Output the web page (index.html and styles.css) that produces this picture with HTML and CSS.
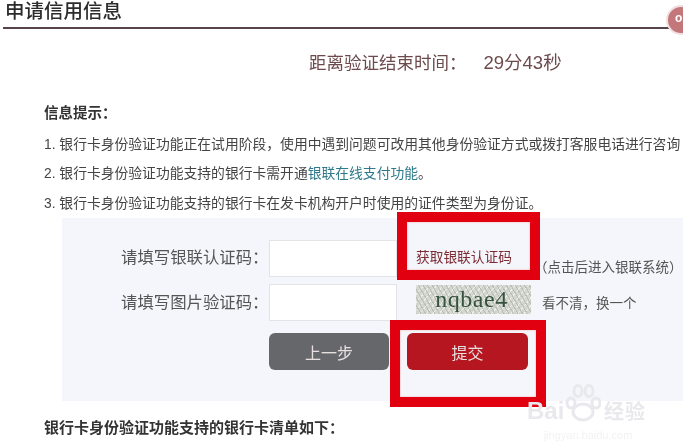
FILE: index.html
```html
<!DOCTYPE html>
<html lang="zh-CN">
<head>
<meta charset="utf-8">
<title>申请信用信息</title>
<link rel="stylesheet" href="styles.css">
</head>
<body>
<div class="page">
  <header class="head"><h1>申请信用信息</h1></header>
  <div class="badge">o</div>
  <p class="timer">距离验证结束时间：<span class="time">29分43秒</span></p>
  <h2 class="tips-title">信息提示：</h2>
  <ol class="tips">
    <li>1. 银行卡身份验证功能正在试用阶段，使用中遇到问题可改用其他身份验证方式或拨打客服电话进行咨询</li>
    <li>2. 银行卡身份验证功能支持的银行卡需开通<a class="link">银联在线支付功能</a>。</li>
    <li>3. 银行卡身份验证功能支持的银行卡在发卡机构开户时使用的证件类型为身份证。</li>
  </ol>
  <section class="panel">
    <div class="row">
      <label class="label">请填写银联认证码：</label>
      <div class="input"></div>
      <a class="get-code">获取银联认证码</a>
      <span class="hint">（点击后进入银联系统）</span>
    </div>
    <div class="row row-2">
      <label class="label">请填写图片验证码：</label>
      <div class="input"></div>
      <div class="captcha">nqbae4</div>
      <a class="refresh">看不清，换一个</a>
    </div>
    <div class="actions">
      <button class="btn btn-back">上一步</button>
      <button class="btn btn-submit">提交</button>
    </div>
  </section>
  <h2 class="list-title">银行卡身份验证功能支持的银行卡清单如下：</h2>
  <div class="frame frame-code"></div>
  <div class="frame frame-submit"></div>
  <div class="watermark">
    <div class="wm-top">
      <span class="wm-en">Bai</span>
      <svg class="paw" viewBox="0 0 36 40" width="36" height="40"><g fill="none" stroke="#e9e9ed" stroke-width="3"><ellipse cx="18" cy="29" rx="10" ry="8"/><ellipse cx="6" cy="20" rx="4" ry="5"/><ellipse cx="13" cy="8" rx="4" ry="5.5"/><ellipse cx="24" cy="8" rx="4" ry="5.5"/><ellipse cx="31" cy="20" rx="4" ry="5"/></g></svg>
      <span class="wm-zh">经验</span>
    </div>
    <div class="wm-url">jingyan.baidu.com</div>
  </div>
</div>
</body>
</html>
```
FILE: styles.css
```css
* { box-sizing: border-box; }
html, body { margin: 0; padding: 0; }
body { background: #fff; font-family: "Liberation Sans", "Noto Sans CJK SC", sans-serif; color: #333; overflow: hidden; }
.page { position: relative; width: 683px; height: 445px; overflow: hidden; filter: blur(.35px); }
.head { height: 29px; margin: 0 0 0 3px; border-bottom: 2px solid #59434a; }
.head h1 { margin: 0; font-size: 19.5px; line-height: 22px; font-weight: 500; color: #2b2b2b; padding-left: 2px; }
.badge { position: absolute; left: 666px; top: 5px; width: 30px; height: 30px; border-radius: 50%; background: #c4777a; border: 2px solid #f0dfe0; color: #fff; font-size: 12px; font-weight: 700; line-height: 22px; padding-left: 7px; }
.timer { margin: 23px 0 0 309px; font-size: 17.5px; line-height: 22px; color: #6d4a4c; white-space: nowrap; }
.time { margin-left: 17px; font-size: 18.5px; }
.tips-title { margin: 30px 0 0 44px; font-size: 14.5px; line-height: 18px; font-weight: 700; color: #333; }
.tips { list-style: none; margin: 12px 0 0 44px; padding: 0; font-size: 13.8px; color: #444; white-space: nowrap; }
.tips li { height: 30px; line-height: 22px; }
.tips li:first-child { height: 29px; }
.link { color: #2f7a8a; }
.panel { margin: -5px 0 0 62px; height: 183px; padding-top: 22px; background: #f5f6fb; }
.row { display: flex; height: 36px; align-items: center; }
.row-2 { margin-top: 8px; }
.label { width: 207px; padding-left: 59px; margin-top: -4px; font-size: 16.4px; color: #555; white-space: nowrap; }
.row-2 .label { margin-top: -3px; }
.input { width: 128px; height: 37px; background: #fff; border: 1px solid #e4e4e8; flex: none; }
.get-code { margin-left: 19px; margin-top: -4px; width: 100px; font-size: 13.7px; color: #7b2d33; white-space: nowrap; }
.hint { margin-left: 18px; margin-top: 15px; font-size: 13.5px; color: #555; white-space: nowrap; }
.captcha { margin-left: 19px; margin-top: -5px; width: 115px; height: 29px; padding-right: 4px; text-align: center; font-family: "Liberation Serif", serif; font-size: 24px; line-height: 29px; letter-spacing: .5px; color: #37523f; background-color: #d3d7cf; background-image: repeating-linear-gradient(60deg, #b9bfb5 0 1px, transparent 1px 4px), repeating-linear-gradient(-50deg, #eceee9 0 1px, transparent 1px 5px); }
.refresh { margin-left: 11px; font-size: 13.5px; color: #555; white-space: nowrap; }
.actions { display: flex; gap: 18px; margin: 13px 0 0 207px; }
.btn { width: 120px; height: 37px; border: 0; border-radius: 6px; font-family: inherit; font-size: 16px; color: #e8e0e0; padding: 0; }
.btn-back { background: #66676b; }
.btn-submit { background: #b5161f; width: 121px; }
.list-title { margin: 17px 0 0 44px; font-size: 15px; line-height: 20px; font-weight: 700; color: #333; white-space: nowrap; }
.frame { position: absolute; border: 10px solid #e1000f; box-shadow: inset 0 0 2px #f7a0a5; }
.frame-code { left: 397px; top: 212px; width: 143px; height: 68px; }
.frame-submit { left: 390px; top: 320px; width: 156px; height: 87px; }
.watermark { position: absolute; left: 527px; top: 383px; width: 122px; color: #e9e9ed; font-weight: 700; }
.wm-top { display: flex; align-items: flex-end; height: 40px; gap: 3px; }
.wm-en { font-size: 24px; line-height: 24px; width: 35px; }
.wm-zh { font-size: 20px; line-height: 22px; letter-spacing: 1px; }
.wm-url { font-size: 11px; line-height: 14px; font-weight: 400; text-align: center; color: #f2f2f2; margin-top: 5px; }
```
